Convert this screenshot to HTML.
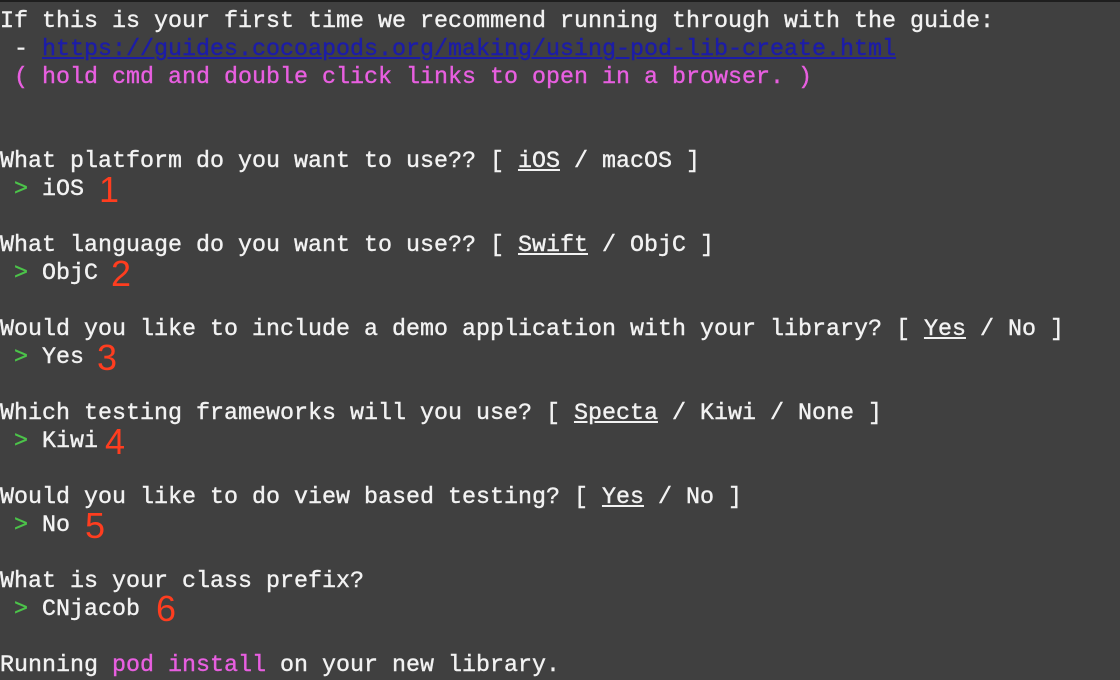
<!DOCTYPE html>
<html><head><meta charset="utf-8"><style>
html,body{margin:0;padding:0;}
body{width:1120px;height:674px;overflow:hidden;background:#404040;position:relative;border-top:2px solid #1e1e1e;box-sizing:border-box;}
pre{margin:0;position:absolute;left:0;top:6px;font-family:"Liberation Mono",monospace;font-size:23.33px;line-height:28px;color:#f2f2f2;-webkit-text-stroke:0.4px currentColor;}
.l{color:#1c1ca8;text-decoration:underline;}
.m{color:#e85fe0;}
.g{color:#4cc44a;}
u{text-decoration:underline;}
.n{position:absolute;font-family:"Liberation Sans",sans-serif;font-size:36px;line-height:36px;color:#ff3d1f;}
</style></head><body>
<pre>If this is your first time we recommend running through with the guide:
 - <span class="l">https://guides.cocoapods.org/making/using-pod-lib-create.html</span>
<span class="m"> ( hold cmd and double click links to open in a browser. )</span>


What platform do you want to use?? [ <u>iOS</u> / macOS ]
 <span class="g">&gt;</span> iOS

What language do you want to use?? [ <u>Swift</u> / ObjC ]
 <span class="g">&gt;</span> ObjC

Would you like to include a demo application with your library? [ <u>Yes</u> / No ]
 <span class="g">&gt;</span> Yes

Which testing frameworks will you use? [ <u>Specta</u> / Kiwi / None ]
 <span class="g">&gt;</span> Kiwi

Would you like to do view based testing? [ <u>Yes</u> / No ]
 <span class="g">&gt;</span> No

What is your class prefix?
 <span class="g">&gt;</span> CNjacob

Running <span class="m">pod install</span> on your new library.</pre>
<div class="n" style="left:99px;top:170px">1</div>
<div class="n" style="left:111px;top:254px">2</div>
<div class="n" style="left:97px;top:338px">3</div>
<div class="n" style="left:105px;top:422px">4</div>
<div class="n" style="left:85px;top:506px">5</div>
<div class="n" style="left:156px;top:589px">6</div>
</body></html>
